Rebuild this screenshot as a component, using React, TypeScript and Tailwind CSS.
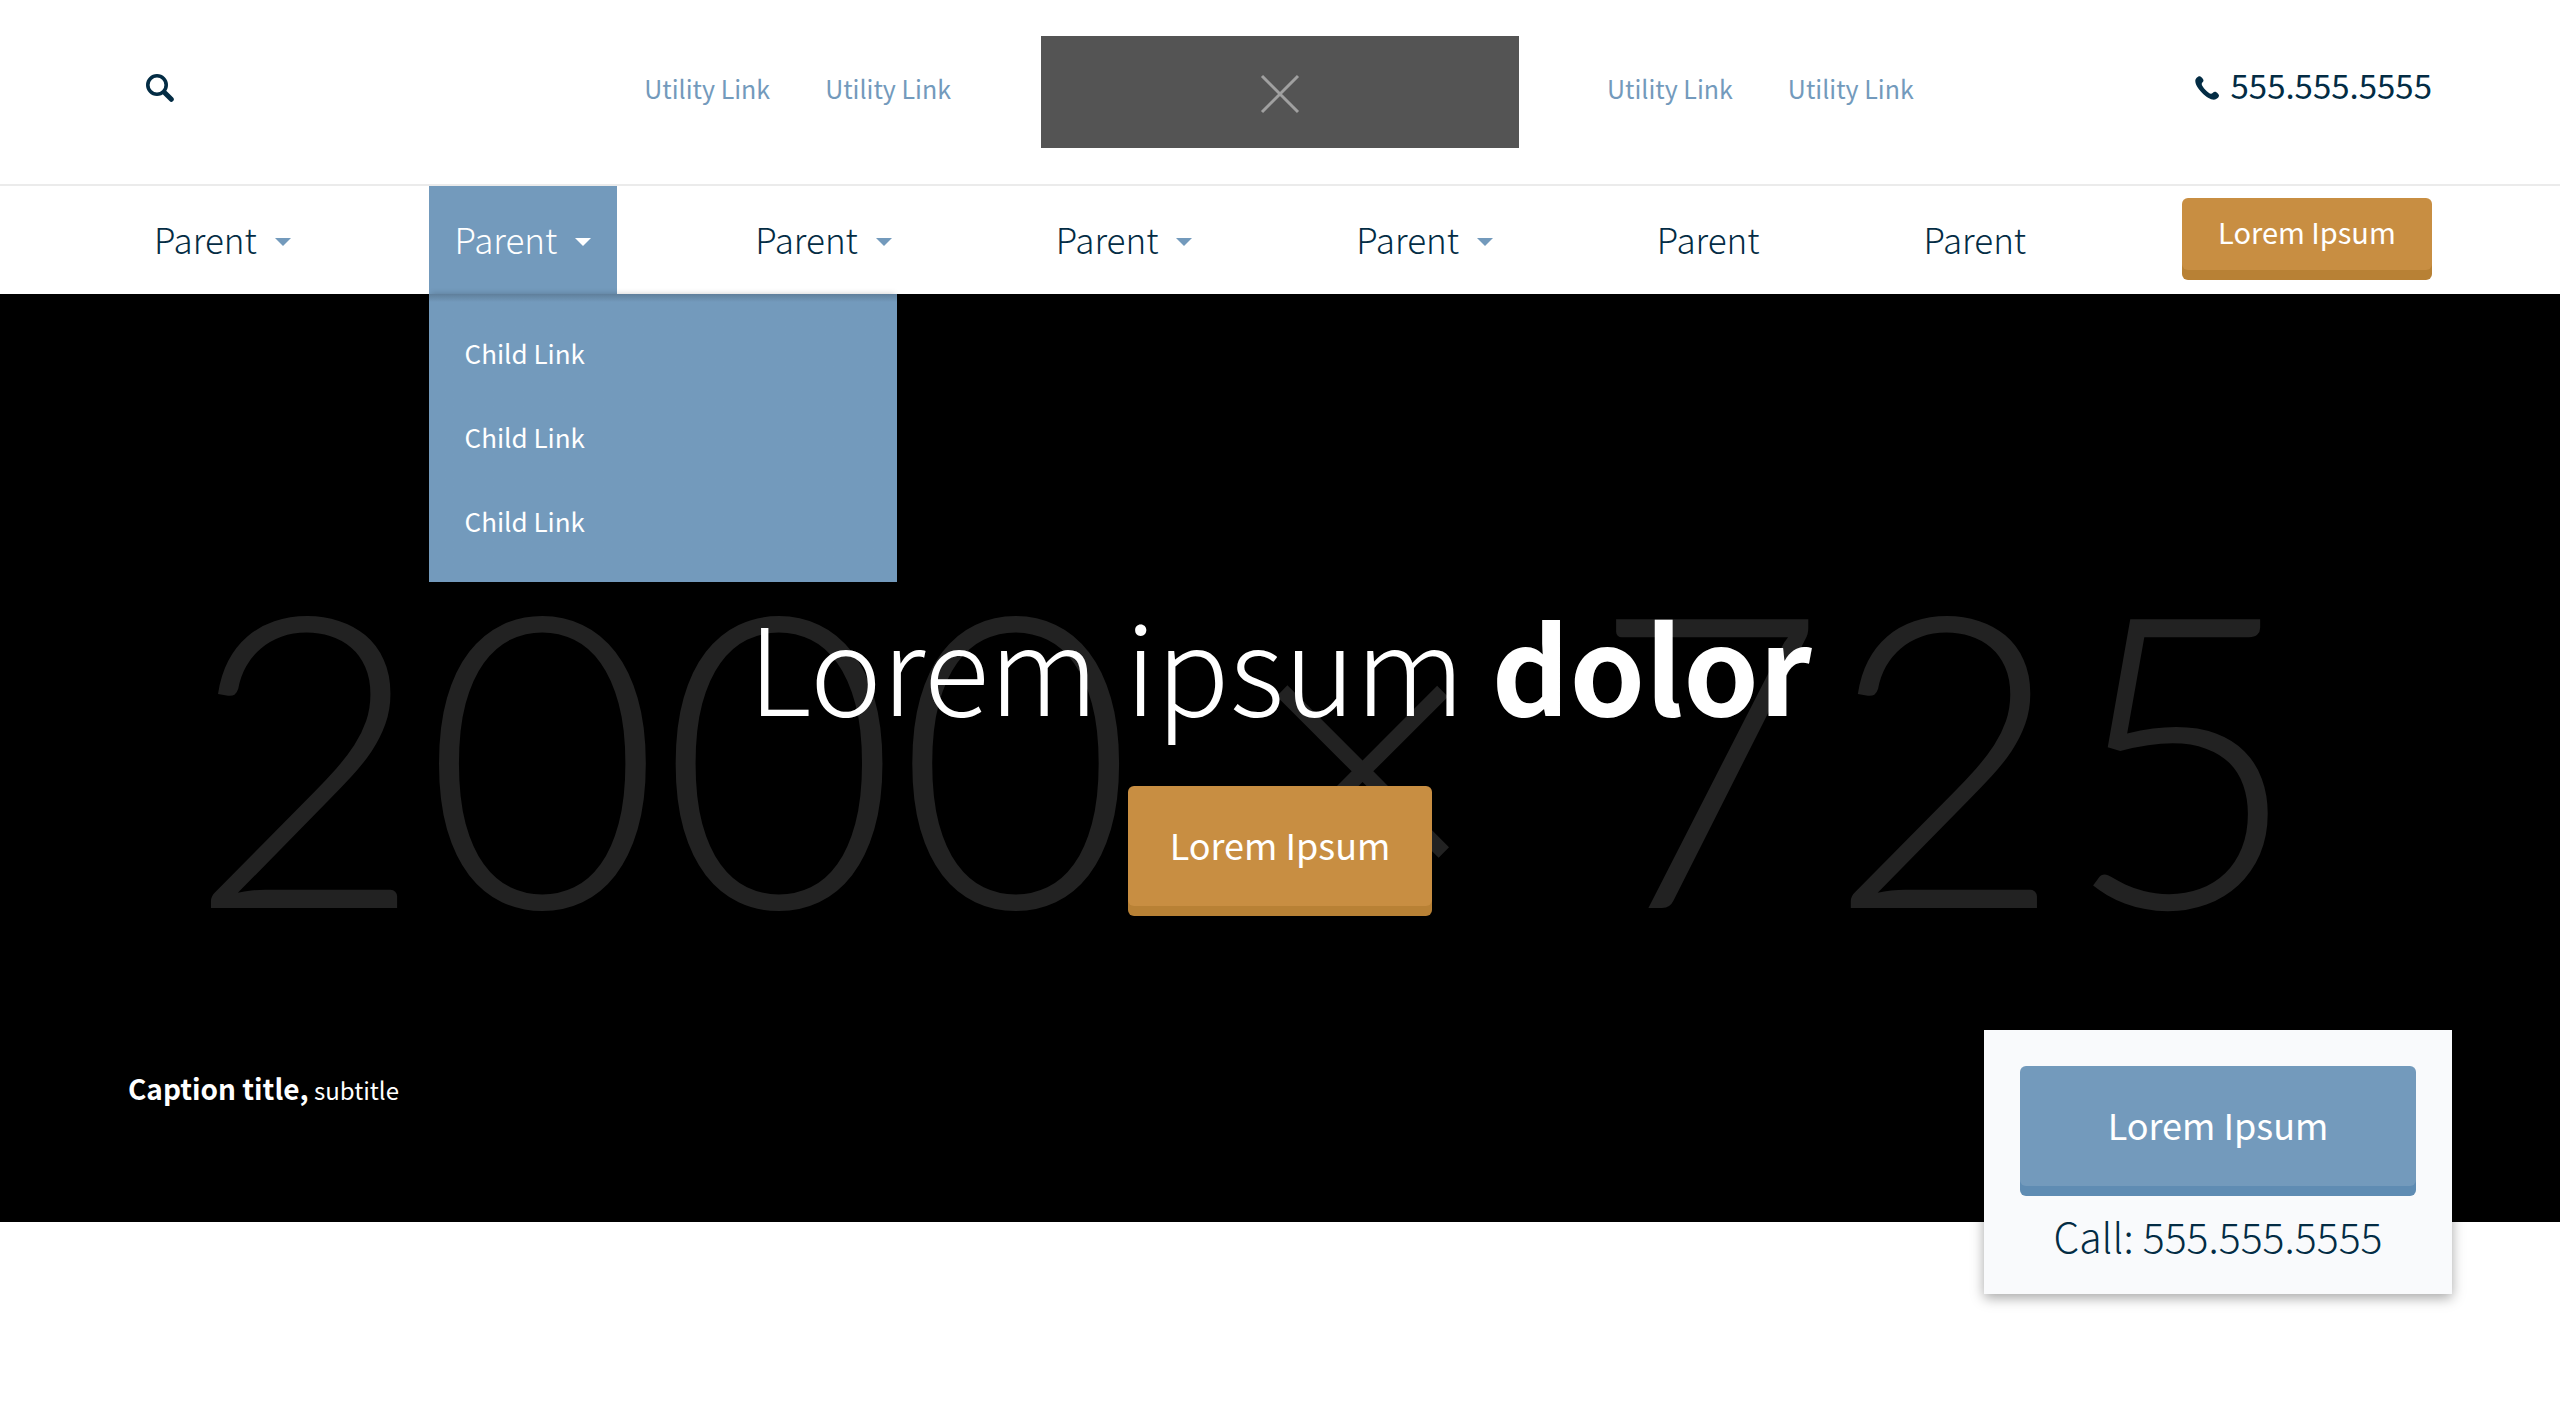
import React from 'react';

const FONT = 'font-["Noto_Sans_CJK_SC",sans-serif]';

function SearchIcon() {
  return (
    <svg viewBox="0 0 28 28" className="size-7" fill="none" stroke="currentColor" aria-hidden="true">
      <circle cx="11" cy="11" r="9.2" strokeWidth="3.6" />
      <path d="M18 18l1 1" strokeWidth="4" />
      <path d="M19.500 19.500l5.800 5.800" strokeWidth="5" strokeLinecap="round" />
    </svg>
  );
}

function PhoneIcon() {
  return (
    <svg viewBox="0 0 24 24" className="size-6" fill="currentColor" aria-hidden="true">
      <path d="M4.500 .3c1.500 0 4 2.700 4 4.200 0 1.600-1.800 2-1.800 3.600 0 2.500 6.700 9.700 9.300 9.700 1.400 0 2.300-2 4-2 1.500 0 4 2.500 4 3.800 0 1.900-2.700 4.100-5 4.100C12 23.700 .3 11.500 .3 5 .3 2.700 2.600 .3 4.500 .3z" />
    </svg>
  );
}

function Caret() {
  return (
    <svg viewBox="0 0 16 8" className="mt-1.5 h-2 w-4" fill="currentColor" aria-hidden="true">
      <path d="M0 0h16L8 8z" />
    </svg>
  );
}

function UtilityLinks() {
  return (
    <nav aria-label="Utility" className="flex gap-[55px] text-[25px] leading-8 text-[#739abc]">
      <a href="#">Utility Link</a>
      <a href="#">Utility Link</a>
    </nav>
  );
}

function Dropdown() {
  return (
    <ul className="absolute top-full left-0 z-10 w-[468px] bg-[#739abc] bg-linear-to-b from-[#5f7f9b] to-[#739abc] to-[8px] pt-4 pb-5 pl-9 text-[26px] text-white shadow-[0_-2px_6px_-2px_rgba(0,0,0,0.2)]">
      {[1, 2, 3].map((n) => (
        <li key={n}>
          <a href="#" className="flex h-[84px] items-center">
            Child Link
          </a>
        </li>
      ))}
    </ul>
  );
}

const items = [
  { id: 1, menu: true, open: false },
  { id: 2, menu: true, open: true },
  { id: 3, menu: true, open: false },
  { id: 4, menu: true, open: false },
  { id: 5, menu: true, open: false },
  { id: 6, menu: false, open: false },
  { id: 7, menu: false, open: false },
];

export default function App() {
  return (
    <div className={`${FONT} min-h-screen bg-white text-[#032c44]`}>
      <header>
        <div className="grid grid-cols-[1fr_478px_1fr] items-center border-b-2 border-[#ebebeb] px-[128px] py-9">
          <div className="flex items-center justify-between pr-[90px] pb-2 pl-[18px]">
            <button type="button" aria-label="Search">
              <SearchIcon />
            </button>
            <UtilityLinks />
          </div>
          <a href="#" aria-label="Home" className="flex h-28 items-center justify-center bg-[#545454] text-[#a0a0a0]">
            <svg viewBox="0 0 40 40" className="mt-1 size-10" stroke="currentColor" strokeWidth="3" aria-hidden="true">
              <path d="M2 2l36 36M38 2L2 38" />
            </svg>
          </a>
          <div className="flex items-center justify-between pb-2 pl-[88px]">
            <UtilityLinks />
            <a href="tel:5555555555" className="flex items-center gap-3 text-[33px] leading-8">
              <PhoneIcon />
              <span className="pb-1.5">555.555.5555</span>
            </a>
          </div>
        </div>

        <nav aria-label="Main" className="flex h-[108px] items-center justify-between px-[128px]">
          {items.map((item) => (
            <div key={item.id} className="relative h-full">
              {item.menu ? (
                <button
                  type="button"
                  aria-expanded={item.open}
                  className={`flex h-full items-center gap-[18px] px-[26px] pb-0.5 text-[35px] font-light ${
                    item.open ? 'bg-[#739abc] text-white' : ''
                  }`}
                >
                  Parent
                  <span className={item.open ? 'text-white' : 'text-[#739abc]'}>
                    <Caret />
                  </span>
                </button>
              ) : (
                <a href="#" className="flex h-full items-center px-[26px] pb-0.5 text-[35px] font-light">
                  Parent
                </a>
              )}
              {item.open && <Dropdown />}
            </div>
          ))}
          <a
            href="#"
            className="mb-3 ml-[18px] flex h-[72px] w-[250px] items-center justify-center rounded-md bg-[#c88e42] pb-1 text-[29px] text-white shadow-[0_10px_0_#b88135]"
          >
            Lorem Ipsum
          </a>
        </nav>
      </header>

      <main>
        <section className="relative flex aspect-[2000/725] w-full flex-col items-center justify-center bg-black text-white">
          <div
            aria-hidden="true"
            className="absolute inset-0 flex items-center justify-center gap-[110px] pr-[72px] pb-4 font-[Lato,sans-serif] text-[408px] leading-none font-light text-[#222222]"
          >
            <span>2000</span>
            <span>×</span>
            <span>725</span>
          </div>
          <h1 className="relative text-[121px] leading-[124px] font-light">
            Lorem ipsum <strong className="font-bold">dolor</strong>
          </h1>
          <a
            href="#"
            className="relative mt-[60px] mb-2 flex h-[120px] w-[304px] items-center justify-center rounded-md bg-[#c88e42] pb-1 text-[36px] shadow-[0_10px_0_#b88135]"
          >
            Lorem Ipsum
          </a>
          <p className="absolute bottom-[112px] left-[128px] text-[24px] leading-10">
            <strong className="text-[28px] font-bold">Caption title,</strong> subtitle
          </p>
          <aside className="absolute right-[108px] -bottom-[72px] w-[468px] bg-[#f9fafc] px-9 pt-9 pb-7 text-center shadow-[0_4px_12px_rgba(0,0,0,0.35)]">
            <a
              href="#"
              className="mb-[18px] flex h-[120px] items-center justify-center rounded-md bg-[#739abc] pb-1 text-[36px] text-white shadow-[0_10px_0_#5f8cb3]"
            >
              Lorem Ipsum
            </a>
            <a href="tel:5555555555" className="block text-[41px] leading-[62px] font-light text-[#032c44]">
              Call: 555.555.5555
            </a>
          </aside>
        </section>
      </main>
    </div>
  );
}
